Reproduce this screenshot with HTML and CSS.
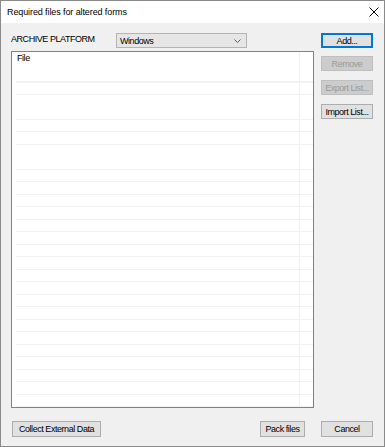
FILE: index.html
```html
<!DOCTYPE html>
<html>
<head>
<meta charset="utf-8">
<link rel="stylesheet" href="styles.css">
</head>
<body>
<div class="window">
  <div class="titlebar">
    <span class="title">Required files for altered forms</span>
    <svg class="close" width="10" height="10" viewBox="0 0 10 10"><path d="M0.5 0.5 L9.5 9.5 M9.5 0.5 L0.5 9.5" stroke="#000" stroke-width="1" fill="none"/></svg>
  </div>
  <div class="client">
    <div class="main">
      <div class="left">
        <div class="platform-row">
          <span class="label">ARCHIVE PLATFORM</span>
          <div class="select">
            <span class="select-text">Windows</span>
            <svg class="chevron" width="7" height="4" viewBox="0 0 7 4"><path d="M0.5 0.5 L3.5 3.5 L6.5 0.5" stroke="#606060" stroke-width="1" fill="none"/></svg>
          </div>
        </div>
        <div class="list">
          <div class="list-header">File</div>
          <div class="rows"></div>
        </div>
      </div>
      <div class="side">
        <button class="btn default">Add...</button>
        <button class="btn disabled first-gap" disabled>Remove</button>
        <button class="btn disabled gap" disabled>Export List...</button>
        <button class="btn gap">Import List...</button>
      </div>
    </div>
    <div class="footer">
      <button class="btn collect">Collect External Data</button>
      <div class="spacer"></div>
      <button class="btn pack">Pack files</button>
      <button class="btn cancel">Cancel</button>
    </div>
  </div>
</div>
</body>
</html>
```
FILE: styles.css
```css
html, body {
  margin: 0;
  padding: 0;
  background: #f0f0f0;
}
.window {
  width: 385px;
  height: 447px;
  box-sizing: border-box;
  border: 1px solid #8a8a8a;
  display: flex;
  flex-direction: column;
  font-family: "Liberation Sans", Arial, sans-serif;
  color: #000;
  overflow: hidden;
}
.titlebar {
  height: 22px;
  flex: none;
  background: #fff;
  display: flex;
  align-items: center;
  justify-content: space-between;
  padding: 0 5px 0 6px;
}
.title {
  font-size: 9px;
  letter-spacing: -0.1px;
}
.close {
  display: block;
}
.client {
  flex: 1;
  background: #f0f0f0;
  padding: 10px 11px 9px 10px;
  display: flex;
  flex-direction: column;
  font-size: 9px;
  letter-spacing: -0.45px;
}
.main {
  flex: 1;
  display: flex;
  gap: 7px;
  min-height: 0;
}
.left {
  width: 303px;
  display: flex;
  flex-direction: column;
}
.platform-row {
  height: 15px;
  display: flex;
  align-items: center;
}
.label {
  width: 105px;
  margin-top: -4px;
}
.select {
  width: 131px;
  height: 15px;
  box-sizing: border-box;
  border: 1px solid #b4b4b4;
  background: #e6e6e6;
  display: flex;
  align-items: center;
  justify-content: space-between;
  padding: 0 5px 0 3px;
}
.chevron {
  display: block;
}
.list {
  margin-top: 3px;
  flex: 1;
  border: 1px solid #828282;
  background-color: #fff;
  background-image: linear-gradient(to right, transparent 287px, #f0f0f0 287px, #f0f0f0 288px, transparent 288px);
  display: flex;
  flex-direction: column;
}
.list-header {
  height: 18px;
  line-height: 12px;
  padding-left: 5px;
}
.rows {
  flex: 1;
  margin-left: 4px;
  background-image: repeating-linear-gradient(to bottom, transparent 0, transparent 11.5px, #f1f1f1 11.5px, #f1f1f1 12.5px);
}
.side {
  width: 52px;
  display: flex;
  flex-direction: column;
}
.btn {
  height: 15px;
  box-sizing: border-box;
  padding: 0;
  margin: 0;
  border: 1px solid #adadad;
  background: #e1e1e1;
  font-family: "Liberation Sans", Arial, sans-serif;
  font-size: 9px;
  letter-spacing: -0.45px;
  color: #000;
  flex: none;
}
.btn.default {
  border: 1px solid #0078d7;
  box-shadow: inset 0 0 0 1px #0078d7;
}
.btn.disabled {
  background: #cccccc;
  border-color: #bfbfbf;
  color: #9a9a9a;
}
.first-gap {
  margin-top: 8px;
}
.gap {
  margin-top: 9px;
}
.footer {
  margin-top: 13px;
  height: 16px;
  flex: none;
  display: flex;
}
.footer .btn {
  height: 16px;
}
.collect {
  margin-left: 1px;
  width: 89px;
}
.spacer {
  flex: 1;
}
.pack {
  width: 45px;
  margin-right: 16px;
}
.cancel {
  width: 52px;
}
```
